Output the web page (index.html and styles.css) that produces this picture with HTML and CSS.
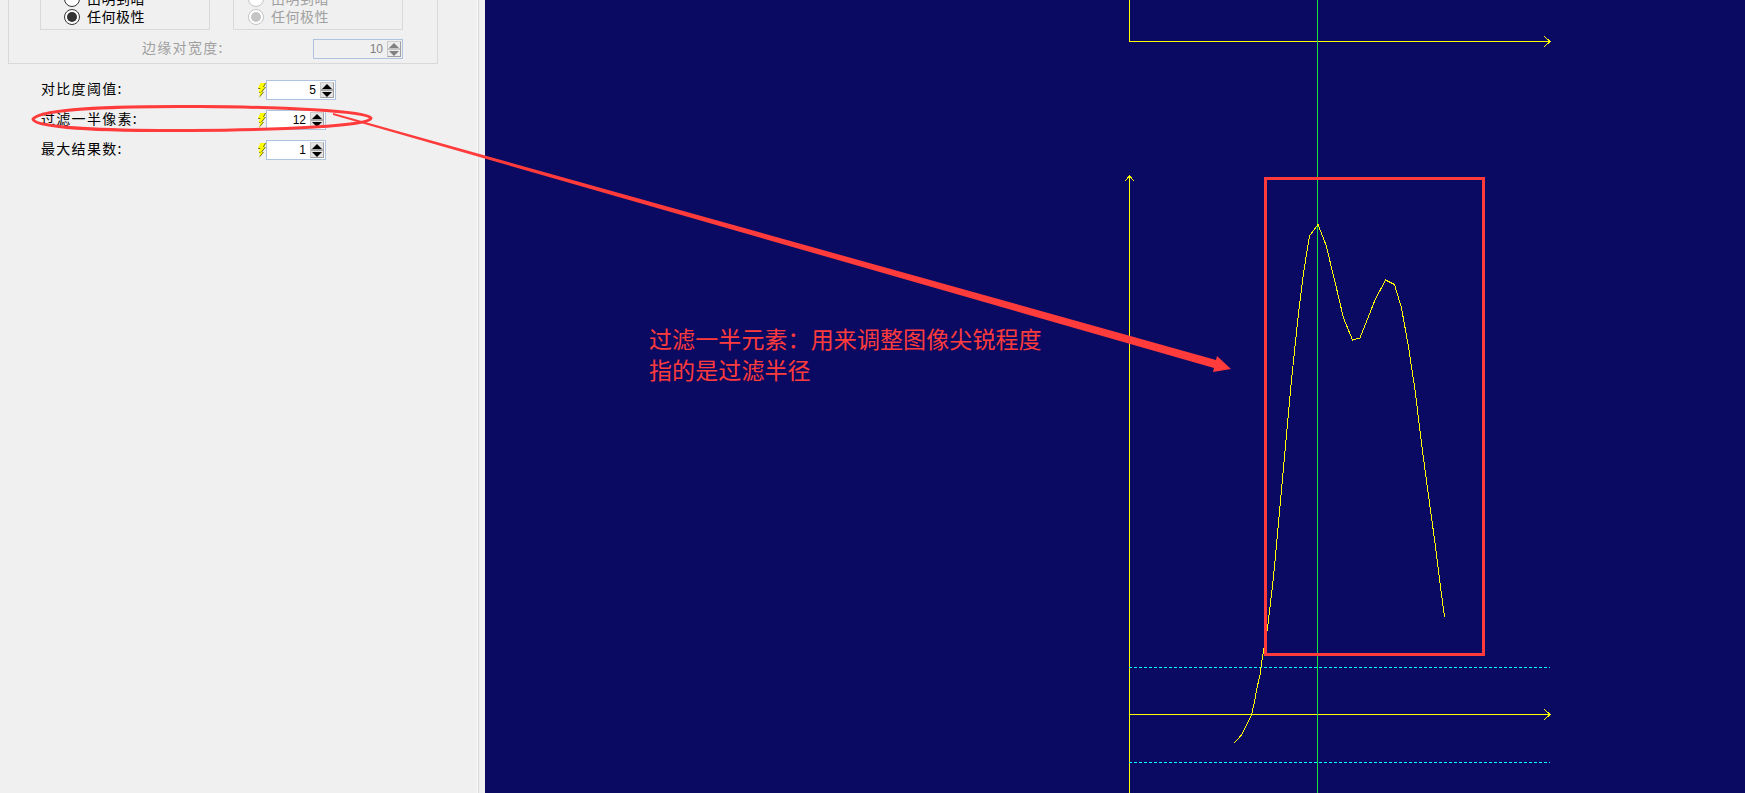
FILE: index.html
```html
<!DOCTYPE html>
<html>
<head>
  <meta charset="UTF-8">
  <title>过滤一半像素</title>
  <link rel="stylesheet" href="styles.css">
</head>
<body>
  <div class="panel">
    <div class="options">
      <div class="polarity-row">
        <div class="polarity">
          <div class="radio-row"><span class="radio"></span><span class="radio-text">由明到暗</span></div>
          <div class="radio-row"><span class="radio on"></span><span class="radio-text">任何极性</span></div>
        </div>
        <div class="polarity disabled">
          <div class="radio-row"><span class="radio"></span><span class="radio-text">由明到暗</span></div>
          <div class="radio-row"><span class="radio on"></span><span class="radio-text">任何极性</span></div>
        </div>
      </div>
      <div class="edge-row">
        <span class="edge-label">边缘对宽度:</span>
        <div class="spin spin-edge disabled">
          <span class="spin-value">10</span>
          <span class="spin-btn"><i class="up"></i><i class="down"></i></span>
        </div>
      </div>
    </div>

    <div class="param">
      <span class="param-label">对比度阈值:</span>
      <svg class="bolt" width="8" height="15" viewBox="0 0 8 15"><path d="M3 0h5L6 4h2L4 9h2L1 15l2-5H1l2-4H0z" fill="#6b6b00"/><path d="M2.500 0H7L5 4h2L3 9h2L1 14l1.500-5H.5l2-4H0z" fill="#ffff00"/></svg>
      <div class="spin spin-wide">
        <span class="spin-value">5</span>
        <span class="spin-btn"><i class="up"></i><i class="down"></i></span>
      </div>
    </div>
    <div class="param">
      <span class="param-label">过滤一半像素:</span>
      <svg class="bolt" width="8" height="15" viewBox="0 0 8 15"><path d="M3 0h5L6 4h2L4 9h2L1 15l2-5H1l2-4H0z" fill="#6b6b00"/><path d="M2.500 0H7L5 4h2L3 9h2L1 14l1.500-5H.5l2-4H0z" fill="#ffff00"/></svg>
      <div class="spin">
        <span class="spin-value">12</span>
        <span class="spin-btn"><i class="up"></i><i class="down"></i></span>
      </div>
    </div>
    <div class="param">
      <span class="param-label">最大结果数:</span>
      <svg class="bolt" width="8" height="15" viewBox="0 0 8 15"><path d="M3 0h5L6 4h2L4 9h2L1 15l2-5H1l2-4H0z" fill="#6b6b00"/><path d="M2.500 0H7L5 4h2L3 9h2L1 14l1.500-5H.5l2-4H0z" fill="#ffff00"/></svg>
      <div class="spin">
        <span class="spin-value">1</span>
        <span class="spin-btn"><i class="up"></i><i class="down"></i></span>
      </div>
    </div>
  </div>

  <div class="splitter"></div>

  <div class="canvas">
    <svg class="plot" width="1260" height="793" viewBox="485 0 1260 793">
      <g fill="none" stroke="#ffff00" stroke-width="1" shape-rendering="crispEdges">
        <path d="M1129.500 0V41.500H1550"/>
        <path d="M1544 36l6 5.500-6 5.500"/>
        <path d="M1129.500 793V176"/>
        <path d="M1125 181l4.500-5 4.500 5"/>
        <path d="M1129.500 714.500H1550"/>
        <path d="M1544 709l6 5.500-6 5.500"/>
      </g>
      <g stroke="#00ffff" stroke-width="1" stroke-dasharray="3 2" shape-rendering="crispEdges">
        <path d="M1129 667.500H1550"/>
        <path d="M1129 762.500H1550"/>
      </g>
      <path d="M1317.500 0V793" stroke="#19e03c" stroke-width="1" shape-rendering="crispEdges"/>
      <polyline fill="none" stroke="#ffff00" stroke-width="1" shape-rendering="crispEdges"
        points="1234,743 1238,739 1241.500,735 1246.500,725 1251.500,715 1254.500,702 1256.500,690 1260,675 1261.500,663 1263.500,651 1267.500,628 1273.500,577 1278.500,523 1282.500,479 1291.500,380 1298.500,313 1303.500,273 1309.500,236 1318,224.500 1326,245 1335,282 1343.500,318 1352.500,340 1360,338 1375,300 1385.500,280 1394.500,284.500 1401.500,308 1408.500,347 1415,390 1421.500,443 1426.500,481 1435,543 1440,583 1444.500,617"/>
      <rect x="1265.500" y="178.500" width="218" height="476" fill="none" stroke="#ff3b3b" stroke-width="3"/>
    </svg>
    <div class="note">过滤一半元素：用来调整图像尖锐程度<br>指的是过滤半径</div>
  </div>

  <!-- hand drawn marks that cross the panel and the canvas -->
  <svg class="marks" width="1745" height="793" viewBox="0 0 1745 793">
    <path d="M33 119C40 108 130 106 200 106.500C280 107 366 111 371 118C372 126 280 130 190 130.500C110 131 34 128 33 119Z" fill="none" stroke="#ff3b3b" stroke-width="3"/>
    <path d="M333 113L1216 360L1217 356L1231 369L1213 372L1214 368L333 115Z" fill="#ff3b3b"/>
  </svg>
</body>
</html>
```

FILE: styles.css
```css
html, body { margin: 0; padding: 0; height: 100%; overflow: hidden; }
body {
  display: flex;
  background-color: #f0f0f0;
  font-family: "Noto Sans CJK SC", sans-serif;
  font-size: 14px;
  color: #000;
}
.panel {
  width: 477px;
  flex: none;
  height: 793px;
  overflow: hidden;
  box-sizing: border-box;
  padding-left: 8px;
}
.splitter {
  width: 8px;
  flex: none;
  box-sizing: border-box;
  border-left: 1px solid #fafafa;
  box-shadow: inset 1px 0 0 #d8d8d8;
}
.canvas {
  flex: 1;
  position: relative;
  background-color: #0a0a62;
  overflow: hidden;
}
.plot { display: block; }
.note {
  position: absolute;
  left: 164px;
  top: 323px;
  color: #ff3b3b;
  font-size: 23px;
  line-height: 31px;
  letter-spacing: 0.100px;
  white-space: nowrap;
}
.marks {
  position: absolute;
  left: 0;
  top: 0;
  pointer-events: none;
}

/* polarity group */
.options {
  width: 430px;
  height: 84px;
  box-sizing: border-box;
  margin-top: -20px;
  border: 1px solid #d9d9d9;
}
.polarity-row {
  display: flex;
  gap: 23px;
  padding-left: 31px;
}
.polarity {
  width: 170px;
  height: 49px;
  box-sizing: border-box;
  padding: 9px 0 0 23px;
  border: 1px solid #d9d9d9;
  border-top: 0;
}
.polarity.disabled { padding-left: 14px; color: #a0a0a0; }
.radio-row {
  display: flex;
  align-items: center;
  gap: 7px;
  height: 18px;
  letter-spacing: 0.500px;
  white-space: nowrap;
}
.radio-text { margin-bottom: 2px; }
.radio {
  width: 16px;
  height: 16px;
  flex: none;
  box-sizing: border-box;
  border: 1px solid #333;
  border-radius: 50%;
  background-color: #fff;
  position: relative;
}
.radio.on::after {
  content: "";
  position: absolute;
  left: 2px;
  top: 2px;
  width: 10px;
  height: 10px;
  border-radius: 50%;
  background-color: #333;
}
.polarity.disabled .radio { border-color: #c4c4c4; }
.polarity.disabled .radio.on::after { background-color: #c4c4c4; }

.edge-row {
  display: flex;
  align-items: center;
  margin-top: 7px;
  padding-left: 133px;
}
.edge-label {
  width: 171px;
  margin-bottom: 4px;
  color: #a0a0a0;
  letter-spacing: 1.300px;
}

/* spin boxes */
.spin {
  display: flex;
  align-items: center;
  justify-content: flex-end;
  width: 60px;
  height: 20px;
  box-sizing: border-box;
  border: 1px solid #aec3df;
  background-color: #fff;
  padding-right: 1px;
  font-family: "Liberation Sans", sans-serif;
  font-size: 12px;
}
.spin-wide { width: 70px; }
.spin-edge { width: 90px; background-color: #f0f0f0; color: #808080; }
.spin-value { margin-right: 4px; }
.spin-btn {
  display: flex;
  flex-direction: column;
  justify-content: center;
  align-items: center;
  gap: 3px;
  width: 14px;
  height: 16px;
  box-sizing: border-box;
  background: linear-gradient(#e4e4e4 44%, #a8a8a8 44%, #a8a8a8 56%, #e4e4e4 56%);
  border-bottom: 1px solid #a0a0a0;
  border-right: 1px solid #a0a0a0;
  border-left: 1px solid #c8c8c8;
  border-top: 1px solid #d0d0d0;
}
.up, .down {
  width: 0;
  height: 0;
  border-left: 5px solid transparent;
  border-right: 5px solid transparent;
}
.up { border-bottom: 5px solid #000; }
.down { border-top: 5px solid #000; }
.disabled .spin-btn { background: linear-gradient(#ececec 44%, #c4c4c4 44%, #c4c4c4 56%, #ececec 56%); }
.disabled .up { border-bottom-color: #808080; }
.disabled .down { border-top-color: #808080; }

/* parameter rows */
.param {
  display: flex;
  align-items: center;
  height: 20px;
  margin-top: 10px;
  padding-left: 33px;
}
.options + .param { margin-top: 16px; }
.param-label {
  width: 217px;
  margin-bottom: 4px;
  letter-spacing: 1.300px;
  white-space: nowrap;
}
.bolt { flex: none; }
```
